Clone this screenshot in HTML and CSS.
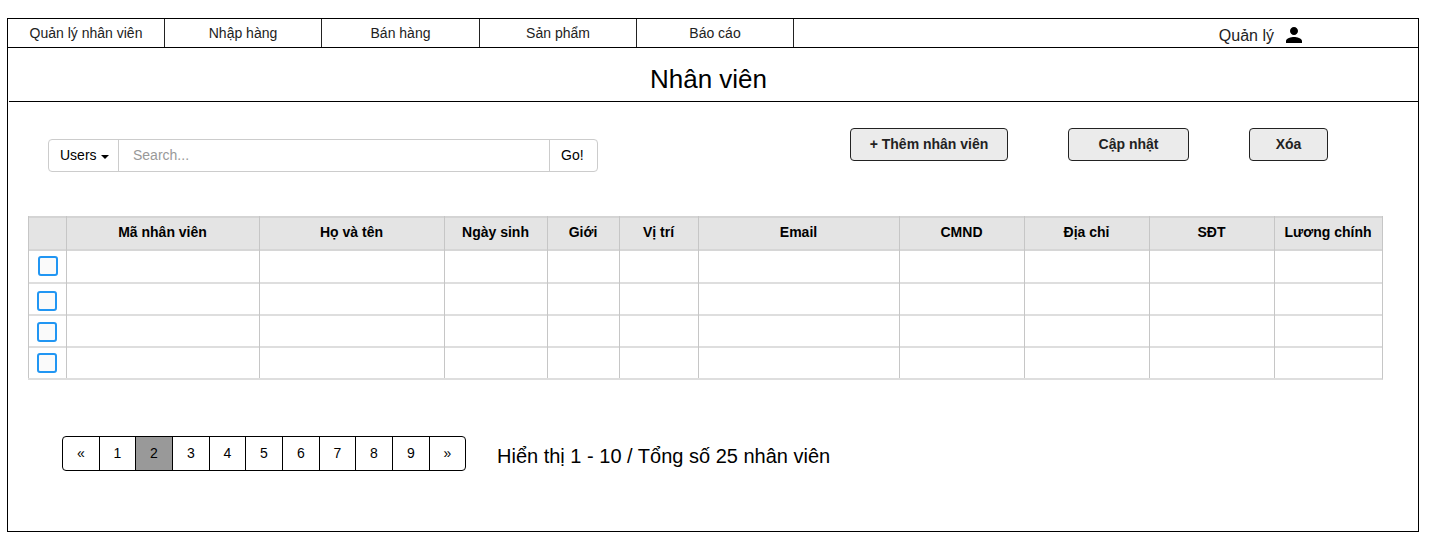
FILE: index.html
```html
<!DOCTYPE html>
<html lang="vi">
<head>
<meta charset="utf-8">
<title>Nhân viên</title>
<link rel="stylesheet" href="styles.css">
</head>
<body>
<main class="frame">
  <header class="topbar">
    <nav class="menu">
      <a class="menu-item">Quản lý nhân viên</a>
      <a class="menu-item">Nhập hàng</a>
      <a class="menu-item">Bán hàng</a>
      <a class="menu-item">Sản phẩm</a>
      <a class="menu-item">Báo cáo</a>
    </nav>
    <div class="account">
      <span class="account-name">Quản lý</span>
      <svg class="account-icon" viewBox="4 4 16 16"><path d="M12 12c2.21 0 4-1.79 4-4s-1.79-4-4-4-4 1.79-4 4 1.79 4 4 4zm0 2c-2.67 0-8 1.34-8 4v2h16v-2c0-2.66-5.33-4-8-4z"/></svg>
    </div>
  </header>
  <h1 class="title">Nhân viên</h1>

  <section class="toolbar">
    <div class="search">
      <div class="search-scope">Users<span class="caret"></span></div>
      <div class="search-field">Search...</div>
      <div class="search-go">Go!</div>
    </div>
    <div class="actions">
      <button class="btn btn-add">+ Thêm nhân viên</button>
      <button class="btn btn-update">Cập nhật</button>
      <button class="btn btn-delete">Xóa</button>
    </div>
  </section>

  <section class="table">
    <div class="row head">
      <div class="cell"></div><div class="cell">Mã nhân viên</div><div class="cell">Họ và tên</div><div class="cell">Ngày sinh</div><div class="cell">Giới</div><div class="cell">Vị trí</div><div class="cell">Email</div><div class="cell">CMND</div><div class="cell">Địa chỉ</div><div class="cell">SĐT</div><div class="cell">Lương chính</div>
    </div>
    <div class="row first">
      <div class="cell pick"><span class="check"></span></div><div class="cell"></div><div class="cell"></div><div class="cell"></div><div class="cell"></div><div class="cell"></div><div class="cell"></div><div class="cell"></div><div class="cell"></div><div class="cell"></div><div class="cell"></div>
    </div>
    <div class="row second">
      <div class="cell pick"><span class="check"></span></div><div class="cell"></div><div class="cell"></div><div class="cell"></div><div class="cell"></div><div class="cell"></div><div class="cell"></div><div class="cell"></div><div class="cell"></div><div class="cell"></div><div class="cell"></div>
    </div>
    <div class="row third">
      <div class="cell pick"><span class="check"></span></div><div class="cell"></div><div class="cell"></div><div class="cell"></div><div class="cell"></div><div class="cell"></div><div class="cell"></div><div class="cell"></div><div class="cell"></div><div class="cell"></div><div class="cell"></div>
    </div>
    <div class="row last">
      <div class="cell pick"><span class="check"></span></div><div class="cell"></div><div class="cell"></div><div class="cell"></div><div class="cell"></div><div class="cell"></div><div class="cell"></div><div class="cell"></div><div class="cell"></div><div class="cell"></div><div class="cell"></div>
    </div>
  </section>

  <footer class="footer">
    <div class="pager">
      <a class="page">«</a><a class="page">1</a><a class="page current">2</a><a class="page">3</a><a class="page">4</a><a class="page">5</a><a class="page">6</a><a class="page">7</a><a class="page">8</a><a class="page">9</a><a class="page">»</a>
    </div>
    <div class="summary">Hiển thị 1 - 10 / Tổng số 25 nhân viên</div>
  </footer>
</main>
</body>
</html>
```
FILE: styles.css
```css
* { box-sizing: border-box; }
body {
  margin: 0;
  padding: 18px 0 0 7px;
  background: #fff;
  color: #000;
  font: 14px/16px "Liberation Sans", Arial, sans-serif;
}
.frame {
  width: 1412px;
  height: 514px;
  border: 1px solid #000;
}
.topbar {
  display: flex;
  justify-content: space-between;
  height: 29px;
  border-bottom: 1px solid #000;
}
.menu {
  display: grid;
  grid-template-columns: 157px 157px 158px 157px 157px;
  color: #222;
}
.menu-item {
  display: flex;
  align-items: center;
  justify-content: center;
  border-right: 1px solid #222;
}
.account {
  display: flex;
  gap: 12px;
  padding: 8px 116px 0 0;
  font-size: 16px;
  line-height: 18px;
  color: #222;
}
.account-icon { width: 16px; height: 16px; fill: #000; }
.title {
  margin: 0 0 0 1px;
  height: 54px;
  padding-top: 16px;
  border-bottom: 1px solid #000;
  font-size: 26px;
  line-height: 30px;
  font-weight: 400;
  text-align: center;
  padding-right: 10px;
}
.toolbar {
  display: flex;
  justify-content: space-between;
  align-items: flex-start;
  height: 114px;
  padding: 26px 90px 0 40px;
}
.search {
  display: grid;
  grid-template-columns: 70px 431px 47px;
  width: 550px;
  height: 33px;
  margin-top: 11px;
  border: 1px solid #ccc;
  border-radius: 4px;
  line-height: 31px;
}
.search-scope { display: flex; align-items: center; padding-left: 11px; border-right: 1px solid #ccc; }
.caret {
  margin: 3px 0 0 4px;
  border: 4px solid transparent;
  border-top-color: #000;
  border-bottom: 0;
}
.search-field { padding-left: 14px; color: #999; border-right: 1px solid #ccc; }
.search-go { padding-left: 11px; }
.actions { display: flex; gap: 60px; }
.btn {
  height: 33px;
  padding: 0;
  border: 1px solid #222;
  border-radius: 4px;
  background: #ebebeb;
  color: #222;
  font: bold 14px/31px "Liberation Sans", Arial, sans-serif;
}
.btn-add { width: 158px; }
.btn-update { width: 121px; }
.btn-delete { width: 79px; }
.table {
  width: 1355px;
  margin-left: 20px;
  border-right: 1px solid #c6c6c6;
  border-bottom: 2px solid #dedede;
}
.row {
  display: grid;
  grid-template-columns: 38px 193px 185px 103px 72px 79px 201px 125px 125px 125px 108px;
  height: 32px;
  border-top: 2px solid #dedede;
}
.cell { margin-top: -2px; border-left: 1px solid #c6c6c6; }
.head { height: 33px; background: #e4e4e4; border-top-color: #d4d4d4; }
.head .cell { padding: 8px 1px 0 0; font-weight: bold; text-align: center; }
.first { height: 33px; border-top-color: #d6d6d6; }
.pick { padding: 8px 0 0 8px; }
.first .pick { padding: 7px 0 0 9px; }
.second .pick { padding-top: 9px; }
.last .pick { padding-top: 7px; }
.check {
  display: block;
  width: 20px;
  height: 20px;
  border: 2px solid #2196f3;
  border-radius: 3px;
  background: #fafafa;
}
.footer { display: flex; gap: 31px; padding: 56px 0 0 54px; }
.pager {
  display: grid;
  grid-template-columns: 37px 36px 37px 37px 36px 37px 37px 36px 37px 37px 35px;
  width: 404px;
  height: 35px;
  border: 1px solid #000;
  border-radius: 4px;
  overflow: hidden;
  line-height: 33px;
  text-align: center;
}
.page { border-right: 1px solid #000; }
.page:last-child { border-right: 0; }
.current { background: #999; }
.summary { padding-top: 9px; font-size: 20px; line-height: 23px; }
```
